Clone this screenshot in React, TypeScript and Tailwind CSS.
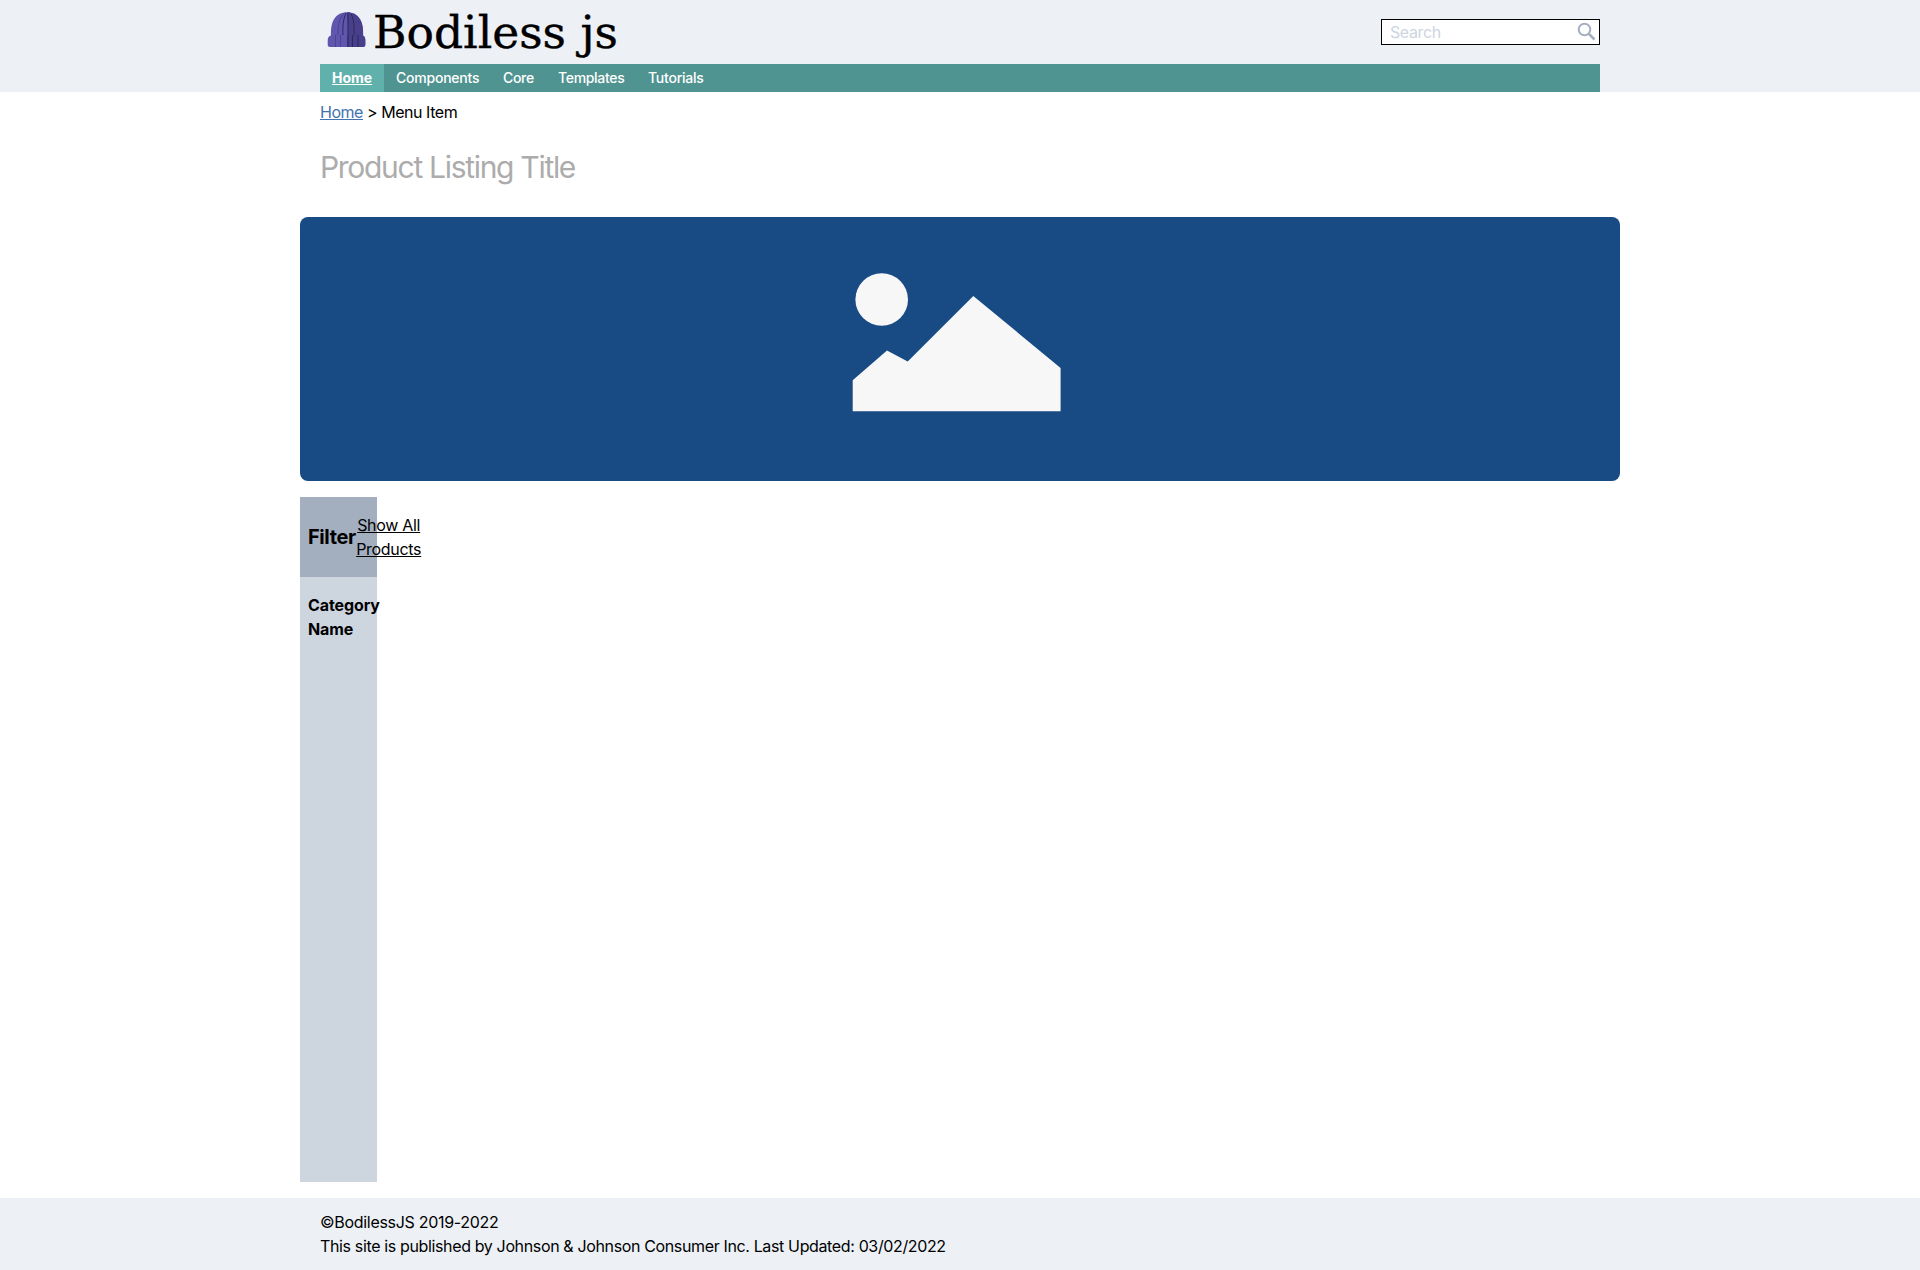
const navItems = [
  { label: 'Components', style: 'w-[107px] tracking-[-0.22px]' },
  { label: 'Core', style: 'w-[55px] tracking-[-0.3px]' },
  { label: 'Templates', style: 'w-[90px] tracking-[-0.32px]' },
  { label: 'Tutorials', style: 'w-[79px] tracking-[-0.24px]' },
];

function Logo() {
  return (
    <svg className="block h-16 w-80" viewBox="0 0 320 64" role="img" aria-label="Bodiless js">
      <path d="M11 36C10 21 16 12.300 27 12.300S44 21 43 36Z" fill="#6156ae" />
      <path d="M27 12.300C38 12.300 44 21 43 36H28Z" fill="#4a3f8a" />
      <path d="M24 13.500C19 18 18 26 18 35" stroke="#483d86" strokeWidth="0.800" fill="none" />
      <path d="M26 13C23 19 22.500 28 23 35M28 13C28 20 28 28 28 35M31 14C34 19 34.500 28 34 35" stroke="#2e2860" strokeWidth="1" fill="none" />
      <path d="M12 35H42Q45.300 36 45.300 40V45Q45.300 47 43 47H10Q7.700 47 7.700 45V40Q7.700 36 12 35Z" fill="#6156ae" />
      <path d="M27 35H42Q45.300 36 45.300 40V45Q45.300 47 43 47H27Z" fill="#4a3f8a" />
      <path d="M15.500 35V47M20.500 35V47" stroke="#483d86" strokeWidth="0.800" />
      <path d="M28 35V47M32.500 35V47M38 35V47" stroke="#2e2860" strokeWidth="1.100" />
      <text x="53" y="47.500" fontSize="45" textLength="245" lengthAdjust="spacingAndGlyphs" strokeWidth="0.400" className="fill-black stroke-black font-['DejaVu_Serif',serif]">
        Bodiless js
      </text>
    </svg>
  );
}

function SearchBox() {
  return (
    <div className="mt-[19px] flex h-[26px] w-[219px] items-center border border-black bg-white pr-[3px] pl-2">
      <input
        aria-label="Search"
        placeholder="Search"
        className="h-full min-w-0 flex-1 text-base tracking-[-0.4px] outline-none placeholder:text-[#cdd5df]"
      />
      <svg className="-mt-px h-[19px] w-[19px]" viewBox="0 0 19 19" fill="none" stroke="#a3aebf" strokeWidth="2">
        <circle cx="7.500" cy="7.500" r="5.800" />
        <path d="M11.500 11.500L17.500 17.500" strokeWidth="2.500" />
      </svg>
    </div>
  );
}

export default function App() {
  return (
    <div className="flex h-[1270px] flex-col bg-white font-['Inter',sans-serif] text-base text-black">
      <header className="bg-[#edf1f6]">
        <div className="mx-auto w-[1280px]">
          <div className="flex h-16 justify-between">
            <Logo />
            <SearchBox />
          </div>
          <nav className="flex h-7 bg-[#4f9491] text-sm leading-7 font-medium text-white">
            <a className="w-16 bg-[#60b0ac] pl-3 font-bold tracking-[-0.02px] underline">Home</a>
            {navItems.map((item) => (
              <a key={item.label} className={`${item.style} pl-3`}>
                {item.label}
              </a>
            ))}
          </nav>
        </div>
      </header>

      <main className="mx-auto flex w-[1320px] flex-1 flex-col">
        <div className="px-5 pt-2 leading-6 tracking-[-0.46px]">
          <a className="text-[#4272b0] underline">Home</a> &gt; Menu Item
        </div>
        <h1 className="mt-[25px] px-5 text-3xl leading-[36px] tracking-[-1.3px] text-[#acacac]">Product Listing Title</h1>
        <div className="mt-8 flex h-[264px] justify-center rounded-lg bg-[#184a84]">
          <svg className="mt-[43px] -ml-px h-[160px] w-[240px]" viewBox="0 0 240 160" fill="#f7f7f7">
            <circle cx="41.700" cy="39.500" r="26.300" />
            <path d="M12.700 120.300L47 90.500L67.700 101.500L133.300 36L220.600 108V151.300H12.700Z" />
          </svg>
        </div>
        <aside className="my-4 flex w-[77px] flex-1 flex-col bg-[#cdd5df]">
          <div className="flex h-20 items-center bg-[#a3aebf] pl-2">
            <h2 className="text-xl font-bold tracking-[-0.4px]">Filter</h2>
            <a className="w-[66px] shrink-0 text-center leading-6 tracking-[-0.3px] underline">Show All Products</a>
          </div>
          <h3 className="px-2 pt-4 leading-6 font-bold tracking-[-0.1px]">Category Name</h3>
        </aside>
      </main>

      <footer className="h-[72px] bg-[#edf1f6]">
        <div className="mx-auto w-[1280px] pt-3 leading-6">
          <p className="tracking-[-0.3px]">©BodilessJS 2019-2022</p>
          <p className="tracking-[-0.36px]">This site is published by Johnson &amp; Johnson Consumer Inc. Last Updated: 03/02/2022</p>
        </div>
      </footer>
    </div>
  );
}
